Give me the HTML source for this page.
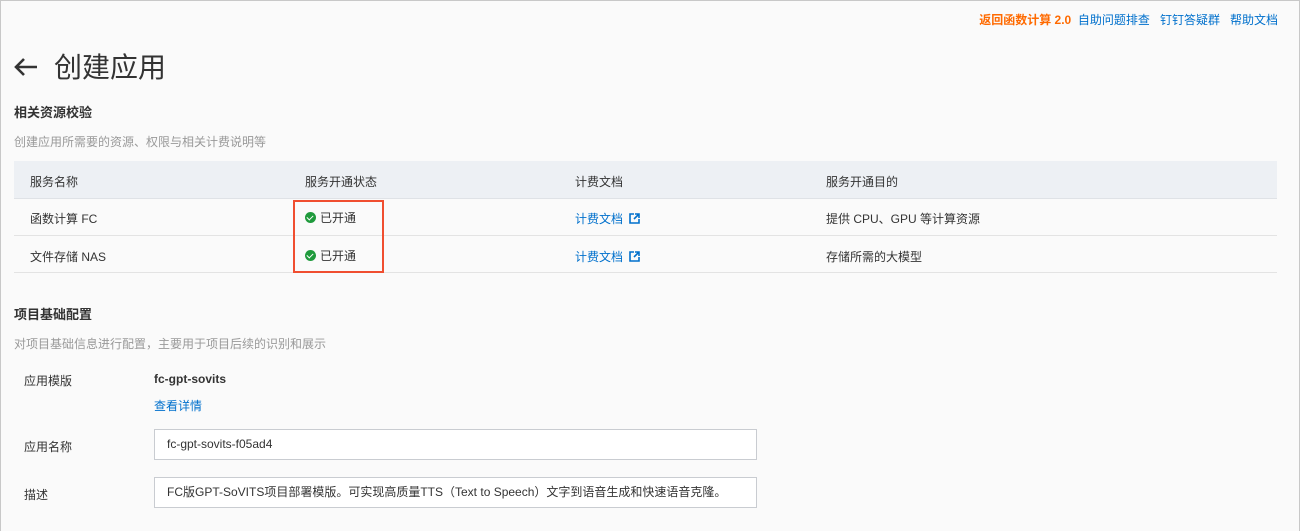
<!DOCTYPE html>
<html><head><meta charset="utf-8"><style>
*{box-sizing:border-box;margin:0;padding:0}
body{width:1300px;height:531px;overflow:hidden;background:#fafafa;font-family:"Liberation Sans","Noto Sans CJK SC",sans-serif;font-size:12px;color:#333;position:relative}
.frame{position:absolute;left:0;top:0;width:1300px;height:531px;border:1px solid #c8c8c8;border-bottom:none}
.a{position:absolute;white-space:nowrap}
.blue{color:#0070cc}
.gray{color:#999}
.th{position:absolute;left:14px;top:161px;width:1263px;height:38px;background:#edf0f4;border-bottom:1px solid #dfe2e6}
.row{position:absolute;left:14px;width:1263px;height:37px;border-bottom:1px solid #e3e3e3}
.ok{display:inline-block;width:11px;height:11px;border-radius:50%;background:#1f9a3c;vertical-align:-1px;margin-right:4px;position:relative}
.ok:after{content:"";position:absolute;left:3px;top:2px;width:3px;height:5px;border:solid #fff;border-width:0 1.5px 1.5px 0;transform:rotate(45deg)}
.inp{position:absolute;left:154px;width:603px;height:31px;border:1px solid #c9ccd1;background:#fff;padding-left:12px;line-height:29px}
</style></head><body>
<div class="frame"></div>
<div class="a" style="right:22px;top:11px;font-size:12px"><b style="color:#ff6a00;font-weight:600">返回函数计算 2.0</b>&nbsp; <span class="blue">自助问题排查</span>&nbsp;&nbsp; <span class="blue">钉钉答疑群</span>&nbsp;&nbsp; <span class="blue">帮助文档</span></div>
<svg class="a" style="left:13px;top:57px" width="26" height="20" viewBox="0 0 26 20"><path d="M24 10H3M11 2L3 10l8 8" fill="none" stroke="#333" stroke-width="2.6"/></svg>
<div class="a" style="left:54px;top:46px;font-size:28px;color:#333">创建应用</div>
<div class="a" style="left:14px;top:102px;font-size:13px;font-weight:bold">相关资源校验</div>
<div class="a gray" style="left:14px;top:133px">创建应用所需要的资源、权限与相关计费说明等</div>
<div class="th"></div>
<div class="a" style="left:30px;top:173px">服务名称</div>
<div class="a" style="left:305px;top:173px">服务开通状态</div>
<div class="a" style="left:575px;top:173px">计费文档</div>
<div class="a" style="left:826px;top:173px">服务开通目的</div>
<div class="row" style="top:199px"></div>
<div class="row" style="top:236px"></div>
<div class="a" style="left:30px;top:210px">函数计算 FC</div>
<div class="a" style="left:305px;top:209px"><span class="ok"></span>已开通</div>
<div class="a blue" style="left:575px;top:210px">计费文档 <svg width="11" height="11" viewBox="0 0 11 11" style="vertical-align:-1px;margin-left:3px"><path d="M5 1H1v9h9V6M6 1h4v4M10 1L5 6" fill="none" stroke="#0070cc" stroke-width="1.6"/></svg></div>
<div class="a" style="left:826px;top:210px">提供 CPU、GPU 等计算资源</div>
<div class="a" style="left:30px;top:248px">文件存储 NAS</div>
<div class="a" style="left:305px;top:247px"><span class="ok"></span>已开通</div>
<div class="a blue" style="left:575px;top:248px">计费文档 <svg width="11" height="11" viewBox="0 0 11 11" style="vertical-align:-1px;margin-left:3px"><path d="M5 1H1v9h9V6M6 1h4v4M10 1L5 6" fill="none" stroke="#0070cc" stroke-width="1.6"/></svg></div>
<div class="a" style="left:826px;top:248px">存储所需的大模型</div>
<div class="a" style="left:293px;top:200px;width:91px;height:73px;border:2px solid #f04e30"></div>
<div class="a" style="left:14px;top:304px;font-size:13px;font-weight:bold">项目基础配置</div>
<div class="a gray" style="left:14px;top:335px">对项目基础信息进行配置，主要用于项目后续的识别和展示</div>
<div class="a" style="left:24px;top:372px">应用模版</div>
<div class="a" style="left:154px;top:372px;font-weight:bold">fc-gpt-sovits</div>
<div class="a blue" style="left:154px;top:397px">查看详情</div>
<div class="a" style="left:24px;top:438px">应用名称</div>
<div class="inp" style="top:429px">fc-gpt-sovits-f05ad4</div>
<div class="a" style="left:24px;top:486px">描述</div>
<div class="inp" style="top:477px">FC版GPT-SoVITS项目部署模版。可实现高质量TTS（Text to Speech）文字到语音生成和快速语音克隆。</div>
</body></html>
